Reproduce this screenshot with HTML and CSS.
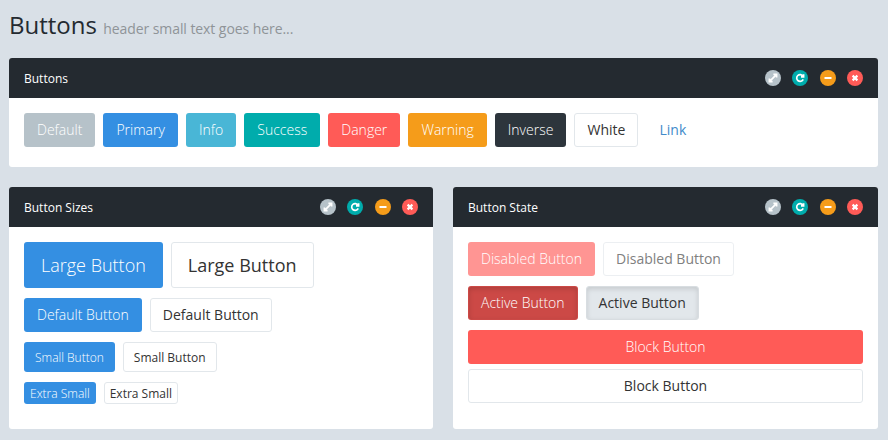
FILE: index.html
```html
<!DOCTYPE html>
<html lang="en">
<head>
  <meta charset="UTF-8">
  <meta name="viewport" content="width=device-width, initial-scale=1.0">
  <title>Buttons</title>
  <link rel="stylesheet" href="styles.css">
</head>
<body>
  <h1 class="page-title">Buttons <small>header small text goes here...</small></h1>

  <section class="panel">
    <div class="panel-heading">
      <h4>Buttons</h4>
      <div class="panel-tools">
        <span class="tool tool-default"><svg viewBox="0 0 16 16"><path d="M5.4 10.6 10.6 5.4M8.4 4.4h3.2v3.2M7.6 11.6H4.4V8.4"/></svg></span>
        <span class="tool tool-success"><svg viewBox="0 0 16 16"><path d="M11 6.2A3.4 3.4 0 1 0 11.2 9.4M11.6 4.2v2.6H9"/></svg></span>
        <span class="tool tool-warning"><svg viewBox="0 0 16 16"><path class="thick" d="M4.5 8h7"/></svg></span>
        <span class="tool tool-danger"><svg viewBox="0 0 16 16"><path class="thick" d="M5.6 5.6l4.8 4.8M10.4 5.6l-4.8 4.8"/></svg></span>
      </div>
    </div>
    <div class="panel-body btn-row">
      <a class="btn btn-default">Default</a>
      <a class="btn btn-primary">Primary</a>
      <a class="btn btn-info">Info</a>
      <a class="btn btn-success">Success</a>
      <a class="btn btn-danger">Danger</a>
      <a class="btn btn-warning">Warning</a>
      <a class="btn btn-inverse">Inverse</a>
      <a class="btn btn-white">White</a>
      <a class="btn btn-link">Link</a>
    </div>
  </section>

  <div class="columns">
    <section class="panel">
      <div class="panel-heading">
        <h4>Button Sizes</h4>
        <div class="panel-tools">
          <span class="tool tool-default"><svg viewBox="0 0 16 16"><path d="M5.4 10.6 10.6 5.4M8.4 4.4h3.2v3.2M7.6 11.6H4.4V8.4"/></svg></span>
          <span class="tool tool-success"><svg viewBox="0 0 16 16"><path d="M11 6.2A3.4 3.4 0 1 0 11.2 9.4M11.6 4.2v2.6H9"/></svg></span>
          <span class="tool tool-warning"><svg viewBox="0 0 16 16"><path class="thick" d="M4.5 8h7"/></svg></span>
          <span class="tool tool-danger"><svg viewBox="0 0 16 16"><path class="thick" d="M5.6 5.6l4.8 4.8M10.4 5.6l-4.8 4.8"/></svg></span>
        </div>
      </div>
      <div class="panel-body stack">
        <div class="btn-line">
          <a class="btn btn-lg btn-primary">Large Button</a>
          <a class="btn btn-lg btn-white">Large Button</a>
        </div>
        <div class="btn-line">
          <a class="btn btn-primary">Default Button</a>
          <a class="btn btn-white">Default Button</a>
        </div>
        <div class="btn-line">
          <a class="btn btn-sm btn-primary">Small Button</a>
          <a class="btn btn-sm btn-white">Small Button</a>
        </div>
        <div class="btn-line">
          <a class="btn btn-xs btn-primary">Extra Small</a>
          <a class="btn btn-xs btn-white">Extra Small</a>
        </div>
      </div>
    </section>

    <section class="panel">
      <div class="panel-heading">
        <h4>Button State</h4>
        <div class="panel-tools">
          <span class="tool tool-default"><svg viewBox="0 0 16 16"><path d="M5.4 10.6 10.6 5.4M8.4 4.4h3.2v3.2M7.6 11.6H4.4V8.4"/></svg></span>
          <span class="tool tool-success"><svg viewBox="0 0 16 16"><path d="M11 6.2A3.4 3.4 0 1 0 11.2 9.4M11.6 4.2v2.6H9"/></svg></span>
          <span class="tool tool-warning"><svg viewBox="0 0 16 16"><path class="thick" d="M4.5 8h7"/></svg></span>
          <span class="tool tool-danger"><svg viewBox="0 0 16 16"><path class="thick" d="M5.6 5.6l4.8 4.8M10.4 5.6l-4.8 4.8"/></svg></span>
        </div>
      </div>
      <div class="panel-body stack">
        <div class="btn-line">
          <a class="btn btn-danger disabled">Disabled Button</a>
          <a class="btn btn-white disabled">Disabled Button</a>
        </div>
        <div class="btn-line">
          <a class="btn btn-danger active">Active Button</a>
          <a class="btn btn-white active">Active Button</a>
        </div>
        <div class="btn-blocks">
          <a class="btn btn-danger">Block Button</a>
          <a class="btn btn-white">Block Button</a>
        </div>
      </div>
    </section>
  </div>
</body>
</html>
```

FILE: styles.css
```css
body {
  margin: 0;
  padding: 0 10px 0 9px;
  background-color: #d9e0e7;
  font-family: "Open Sans", sans-serif;
  font-size: 14px;
  line-height: 20px;
  color: #2d353c;
}

.page-title {
  margin: 0;
  padding-top: 8px;
  height: 58px;
  box-sizing: border-box;
  font-size: 24px;
  line-height: 34px;
  font-weight: 400;
  color: #242a30;
}

.page-title small {
  font-size: 14px;
  font-weight: 400;
  letter-spacing: -0.07px;
  color: #8f9498;
}

.panel {
  background-color: #fff;
  border-radius: 3px;
  overflow: hidden;
}

.panel-heading {
  display: flex;
  align-items: center;
  justify-content: space-between;
  height: 40px;
  padding: 0 15px;
  background-color: #242a30;
}

.panel-heading h4 {
  margin: 2px 0 0;
  font-size: 12px;
  font-weight: 400;
  color: #fff;
}

.panel-tools {
  display: flex;
  gap: 11.5px;
}

.tool {
  display: block;
  width: 16px;
  height: 16px;
  border-radius: 50%;
}

.tool svg {
  display: block;
  width: 16px;
  height: 16px;
  fill: none;
  stroke: #fff;
  stroke-width: 1.7;
}

.tool svg .thick {
  stroke-width: 2.2;
}

.tool-default { background-color: #b6c2c9; }
.tool-success { background-color: #00acac; }
.tool-warning { background-color: #f59c1a; }
.tool-danger { background-color: #ff5b57; }

.panel-body {
  padding: 15px;
}

.btn-row {
  display: flex;
  gap: 8.1px;
  padding-bottom: 20px;
}

.columns {
  display: grid;
  grid-template-columns: 424px 425px;
  gap: 20px;
  margin-top: 20px;
}

.stack {
  display: flex;
  flex-direction: column;
  gap: 10px;
  padding-bottom: 25px;
}

.btn-line {
  display: flex;
  align-items: flex-start;
  gap: 8px;
}

.btn-blocks {
  display: flex;
  flex-direction: column;
  gap: 5px;
}

.btn {
  display: block;
  padding: 6px 12px;
  border: 1px solid transparent;
  border-radius: 3px;
  font-size: 14px;
  font-weight: 300;
  line-height: 20px;
  text-align: center;
  color: #fff;
  white-space: nowrap;
}

.btn-lg {
  padding: 10px 16px;
  font-size: 18px;
  line-height: 24px;
}

.btn-sm {
  padding: 6px 10px 4px;
  font-size: 12px;
  line-height: 18px;
}

.btn-xs {
  padding: 2px 5px 0;
  font-size: 12px;
  line-height: 18px;
}

.btn-default { background-color: #b6c2c9; }
.btn-primary { background-color: #348fe2; }
.btn-info { background-color: #49b6d6; }
.btn-success { background-color: #00acac; }
.btn-danger { background-color: #ff5b57; }
.btn-warning { background-color: #f59c1a; }
.btn-inverse { background-color: #2d353c; }

.btn-white {
  background-color: #fff;
  border-color: #e2e7eb;
  color: #333;
  font-weight: 400;
}

.btn-link {
  color: #428bca;
  font-weight: 400;
}

.btn-danger.disabled {
  background-color: #ff9593;
}

.btn-white.disabled {
  color: #808080;
  border-color: #eceff2;
}

.btn-danger.active {
  background-color: #cc4946;
  box-shadow: inset 0 2px 5px rgba(0, 0, 0, 0.15);
}

.btn-white.active {
  background-color: #e2e7eb;
  border-color: #d8dde1;
  box-shadow: inset 0 2px 5px rgba(0, 0, 0, 0.125);
}
```
